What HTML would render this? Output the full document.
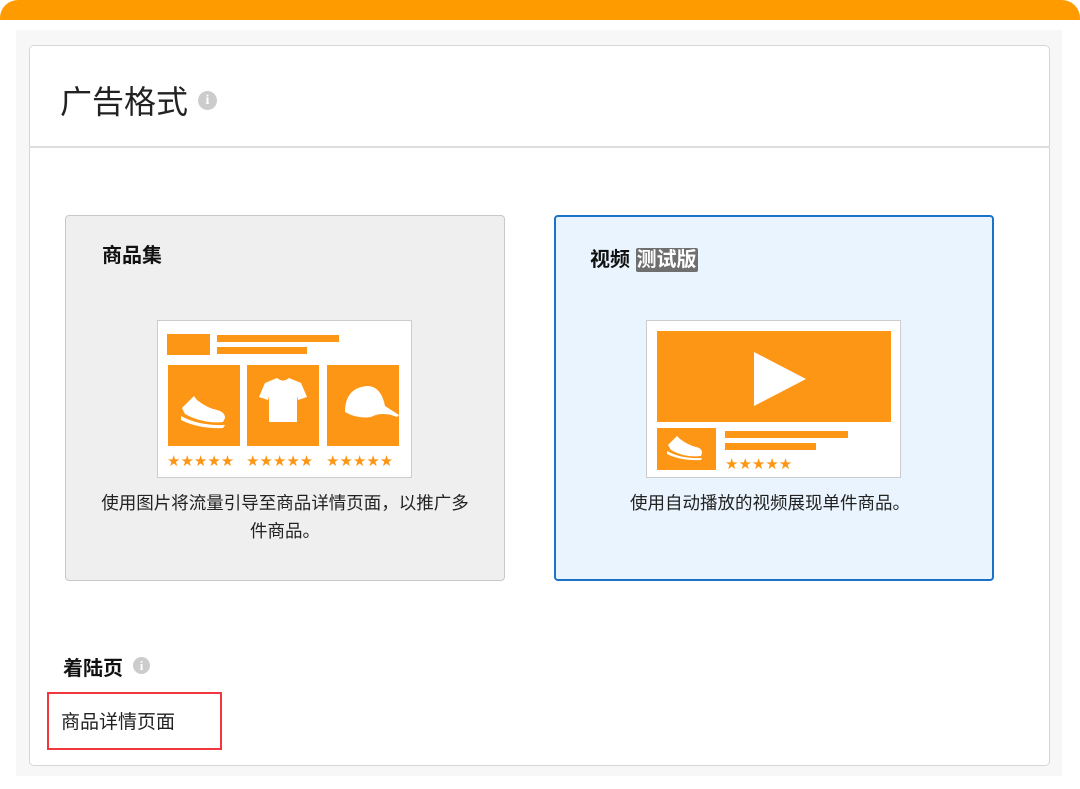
<!DOCTYPE html>
<html><head><meta charset="utf-8"><style>
*{margin:0;padding:0;box-sizing:border-box}
body{width:1080px;height:789px;background:#fff;position:relative;overflow:hidden;font-family:"Liberation Sans","Noto Sans CJK SC",sans-serif;color:#222}
.abs{position:absolute}
.bar{left:0;top:0;width:1080px;height:20px;background:#fe9b00;border-radius:18px 18px 0 0}
.outer{left:16px;top:30px;width:1046px;height:746px;background:#f7f7f7}
.card{left:29px;top:45px;width:1021px;height:721px;background:#fff;border:1px solid #d6d6d6;border-radius:5px}
.hr{left:29px;top:146px;width:1021px;height:2px;background:#ddd}
.info{display:inline-block;border-radius:50%;background:#ccc;color:#fff;font-weight:bold;text-align:center;font-family:"Liberation Serif",serif}
.box1{left:65px;top:215px;width:440px;height:366px;background:#efefef;border:1px solid #c8c8c8;border-radius:4px}
.box2{left:554px;top:215px;width:440px;height:366px;background:#e9f4fe;border:2px solid #1a73c8;border-radius:4px}
.t{font-size:20px;font-weight:bold;color:#111}
.d{font-size:17.5px;color:#222;text-align:center;line-height:28px}
</style></head><body>
<div class="abs bar"></div>
<div class="abs outer"></div>
<div class="abs card"></div>
<div class="abs hr"></div>
<div class="abs" style="left:60px;top:77px;font-size:32px;color:#222">广告格式</div>
<div class="abs info" style="left:198px;top:91px;width:19px;height:19px;font-size:14px;line-height:19px">i</div>

<div class="abs box1"></div>
<div class="abs t" style="left:102px;top:239px">商品集</div>
<svg class="abs" style="left:157px;top:320px" width="255" height="158" viewBox="0 0 255 158">
<rect x="0.5" y="0.5" width="254" height="157" fill="#fff" stroke="#ccc"/>
<rect x="10" y="14" width="43" height="21" fill="#fe9615"/>
<rect x="60" y="15" width="122" height="7" fill="#fe9615"/>
<rect x="60" y="27" width="90" height="7" fill="#fe9615"/>
<rect x="11" y="45" width="72" height="81" fill="#fe9615"/>
<rect x="90" y="45" width="72" height="81" fill="#fe9615"/>
<rect x="170" y="45" width="72" height="81" fill="#fe9615"/>
<path d="M25 88 q8-8 12-12 l3 4 q10 8 20 10 q8 2 8 8 l-2 4 q-20 2-38-8 z M24 96 q18 10 44 9 l-2 3 q-24 1-42-8z" fill="#fff"/>
<path d="M108 63 l12-5 q6 5 12 0 l12 5 l6 14 l-9 3 l-1-4 v26 h-28 v-26 l-1 4 l-9-3z" fill="#fff"/>
<path d="M188 92 q0-24 22-26 q14 0 18 20 l14 9 l-2 2 q-14-6-26 0 q-14 2-26-5z" fill="#fff"/>
<g fill="#fe9615" font-size="15" font-family="DejaVu Sans">
<text x="10" y="146">★★★★★</text><text x="89" y="146">★★★★★</text><text x="169" y="146">★★★★★</text></g>
</svg>
<div class="abs d" style="left:75px;top:489px;width:420px">使用图片将流量引导至商品详情页面，以推广多<br>件商品。</div>

<div class="abs box2"></div>
<div class="abs t" style="left:590px;top:243px">视频 <span style="background:#6f6f6f;color:#fff;padding:1px 1px;border-radius:2px">测试版</span></div>
<svg class="abs" style="left:646px;top:320px" width="255" height="158" viewBox="0 0 255 158">
<rect x="0.5" y="0.5" width="254" height="157" fill="#fff" stroke="#ccc"/>
<rect x="11" y="11" width="234" height="91" fill="#fe9615"/>
<path d="M108 42 v54 l52-27z" fill="#fff" transform="translate(0,-10)"/>
<rect x="11" y="108" width="59" height="42" fill="#fe9615"/>
<path d="M22 125 q6-6 9-9 l3 3 q8 6 16 8 q6 1 6 6 l-1 3 q-16 2-30-6z M21 131 q14 8 35 7 l-1 2 q-20 1-34-6z" fill="#fff"/>
<rect x="79" y="111" width="123" height="7" fill="#fe9615"/>
<rect x="79" y="123" width="91" height="7" fill="#fe9615"/>
<text x="79" y="149" fill="#fe9615" font-size="15" font-family="DejaVu Sans">★★★★★</text>
</svg>
<div class="abs d" style="left:560px;top:489px;width:420px">使用自动播放的视频展现单件商品。</div>

<div class="abs t" style="left:63px;top:652px">着陆页</div>
<div class="abs info" style="left:133px;top:657px;width:17px;height:17px;font-size:13px;line-height:17px">i</div>
<div class="abs" style="left:47px;top:692px;width:175px;height:58px;border:2px solid #f0383e"></div>
<div class="abs" style="left:61px;top:707px;font-size:19px;color:#222">商品详情页面</div>
</body></html>
